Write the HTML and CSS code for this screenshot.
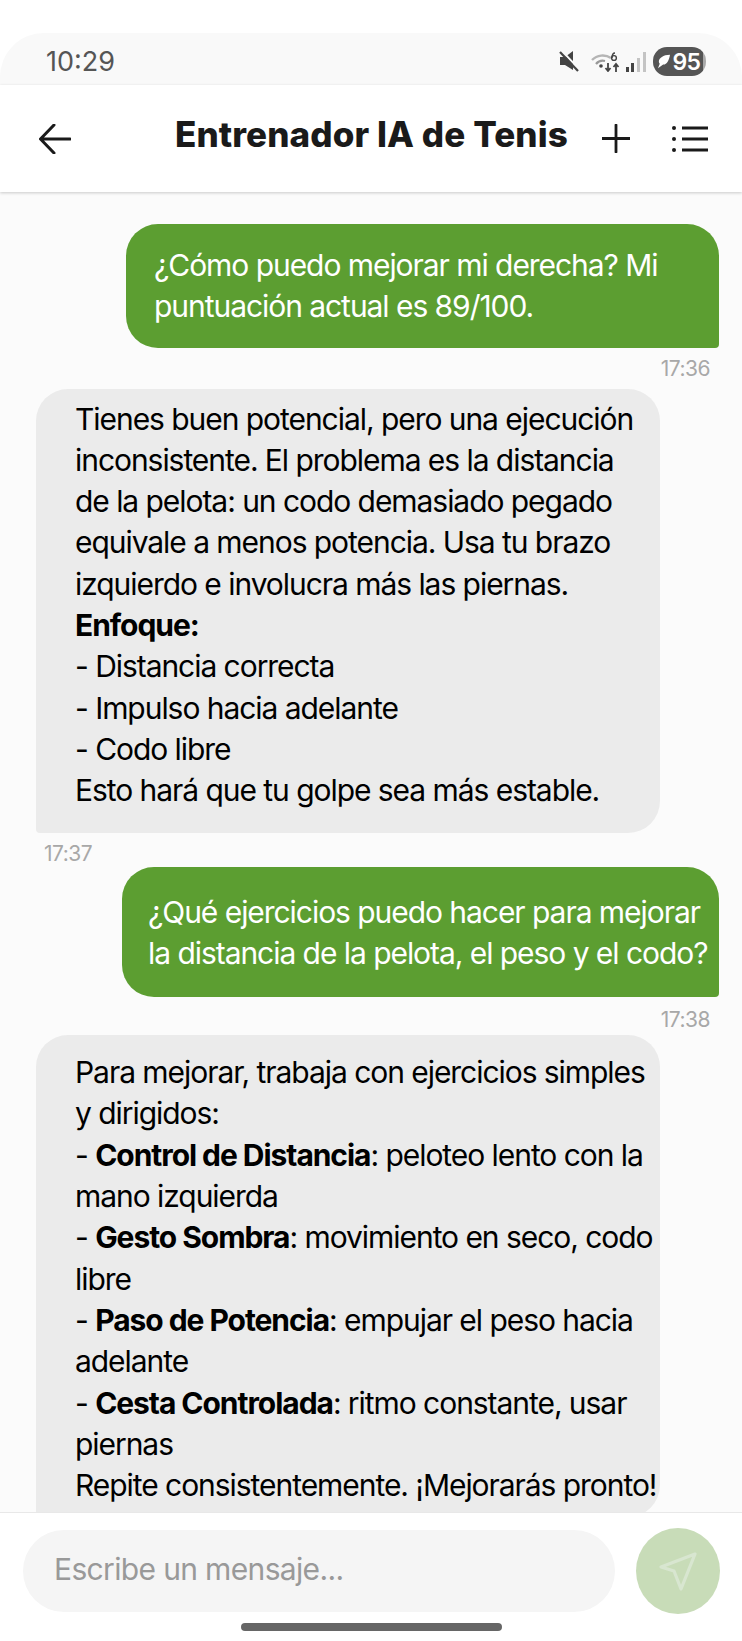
FILE: index.html
```html
<!DOCTYPE html>
<html lang="es">

<head>
    <meta charset="UTF-8">
    <meta name="viewport" content="width=device-width, initial-scale=1.0">
    <title>Entrenador IA de Tenis</title>
    <link rel="stylesheet" href="styles.css">
</head>

<body>
    <div class="phone">
        <!-- Status bar -->
        <div class="status-bar">
            <span class="clock">10:29</span>
            <div class="status-icons">
                <svg class="ic-mute" viewBox="0 0 20 21">
                    <path d="M1 6h5l8-6v19l-8-5H1z" fill="#444" />
                    <path d="M3 0l18 19" stroke="#fafafa" stroke-width="2" fill="none" />
                    <path d="M1 1l18 19" stroke="#444" stroke-width="2.200" fill="none" />
                </svg>
                <svg class="ic-wifi" viewBox="0 0 30 20">
                    <path d="M1 8a15 15 0 0 1 19-2" stroke="#b5b5b5" stroke-width="2.4" fill="none" />
                    <path d="M5 12a9 9 0 0 1 9-3" stroke="#999" stroke-width="2.2" fill="none" />
                    <circle cx="10" cy="14" r="1.8" fill="#444" />
                    <path d="M17 11v8M14.5 16l2.5 3 2.5-3" stroke="#444" stroke-width="1.8" fill="none" />
                    <path d="M25 20v-7M22.5 15l2.5-3 2.5 3" stroke="#444" stroke-width="1.8" fill="none" />
                    <circle cx="23" cy="6" r="2.4" stroke="#444" stroke-width="1.4" fill="none" />
                    <path d="M21 6c0-3 1-5 3-5" stroke="#444" stroke-width="1.4" fill="none" />
                </svg>
                <svg class="ic-signal" viewBox="0 0 20 20">
                    <rect x="0" y="15" width="3" height="5" fill="#444" />
                    <rect x="5" y="11" width="3" height="9" fill="#444" />
                    <rect x="11" y="6" width="3" height="14" fill="#c4c4c4" />
                    <rect x="17" y="0" width="3" height="20" fill="#c4c4c4" />
                </svg>
                <div class="battery">
                    <svg class="ic-bolt" viewBox="0 0 14 16">
                        <path d="M14 0C6 0 1 4 1 8c0 1 .5 2 1 2.500L0 16l6-4.500c4 .5 7-5 8-11.500z" fill="#fff" />
                    </svg>
                    <span>95</span>
                </div>
            </div>
        </div>

        <!-- App bar -->
        <header class="app-bar">
            <svg class="ic-back" viewBox="0 0 32 30">
                <path d="M31 15H2M15 1L1.500 15 15 29" stroke="#1a1a1a" stroke-width="3" fill="none" stroke-linecap="round" stroke-linejoin="round" />
            </svg>
            <h1 class="title">Entrenador IA de Tenis</h1>
            <svg class="ic-plus" viewBox="0 0 28 29">
                <path d="M14 1v27M0 14.500h28" stroke="#1a1a1a" stroke-width="2.800" fill="none" stroke-linecap="round" />
            </svg>
            <svg class="ic-list" viewBox="0 0 36 26">
                <circle cx="2" cy="2" r="2" fill="#1a1a1a" />
                <circle cx="2" cy="13" r="2" fill="#1a1a1a" />
                <circle cx="2" cy="24" r="2" fill="#1a1a1a" />
                <path d="M10 2h26M10 13h26M10 24h26" stroke="#1a1a1a" stroke-width="2.800" fill="none" />
            </svg>
        </header>

        <!-- Messages -->
        <main class="chat">
            <div class="bubble user first">
                ¿Cómo puedo mejorar mi derecha? Mi<br>
                puntuación actual es 89/100.
            </div>
            <div class="time right">17:36</div>

            <div class="bubble bot">
                Tienes buen potencial, pero una ejecución<br>
                inconsistente. El problema es la distancia<br>
                de la pelota: un codo demasiado pegado<br>
                equivale a menos potencia. Usa tu brazo<br>
                izquierdo e involucra más las piernas.<br>
                <b>Enfoque:</b><br>
                - Distancia correcta<br>
                - Impulso hacia adelante<br>
                - Codo libre<br>
                Esto hará que tu golpe sea más estable.
            </div>
            <div class="time left">17:37</div>

            <div class="bubble user second">
                ¿Qué ejercicios puedo hacer para mejorar<br>
                la distancia de la pelota, el peso y el codo?
            </div>
            <div class="time right low">17:38</div>

            <div class="bubble bot last">
                Para mejorar, trabaja con ejercicios simples<br>
                y dirigidos:<br>
                - <b>Control de Distancia</b>: peloteo lento con la<br>
                mano izquierda<br>
                - <b>Gesto Sombra</b>: movimiento en seco, codo<br>
                libre<br>
                - <b>Paso de Potencia</b>: empujar el peso hacia<br>
                adelante<br>
                - <b>Cesta Controlada</b>: ritmo constante, usar<br>
                piernas<br>
                Repite consistentemente. ¡Mejorarás pronto!
            </div>
        </main>

        <!-- Input -->
        <footer class="input-bar">
            <div class="input-row">
                <div class="input">Escribe un mensaje...</div>
                <div class="send">
                    <svg viewBox="0 0 38 39">
                        <path d="M36 2L2 15l13 4 7 18z" stroke="#d8e6d0" stroke-width="3.200" fill="none" stroke-linejoin="round" />
                    </svg>
                </div>
            </div>
            <div class="home-bar"></div>
        </footer>
    </div>
</body>

</html>
```

FILE: styles.css
```css
/* General styles */
* {
    box-sizing: border-box;
}

body {
    margin: 0;
    background: #fff;
    font-family: Inter, "Noto Sans", sans-serif;
}

.phone {
    width: 742px;
    height: 1641px;
    padding-top: 33px;
    display: flex;
    flex-direction: column;
    overflow: hidden;
}

/* Status bar */
.status-bar {
    height: 52px;
    flex: none;
    padding: 5px 36px 0 46px;
    background: #f9f9f9;
    border-radius: 44px 44px 0 0;
    display: flex;
    align-items: center;
    justify-content: space-between;
}

.clock {
    font-size: 27px;
    color: #555;
}

.status-icons {
    display: flex;
    align-items: center;
}

.ic-mute {
    width: 20px;
    height: 21px;
    margin-right: 12px;
}

.ic-wifi {
    width: 30px;
    height: 20px;
    margin-right: 5px;
}

.ic-signal {
    width: 20px;
    height: 20px;
    margin-right: 7px;
}

.battery {
    width: 53px;
    height: 29px;
    background: linear-gradient(to right, #555 94%, #aaa 94%);
    border-radius: 14px;
    color: #fff;
    font-size: 23px;
    font-weight: 600;
    letter-spacing: -0.5px;
    display: flex;
    align-items: center;
    justify-content: center;
    gap: 2px;
}

.ic-bolt {
    width: 12px;
    height: 15px;
}

/* App bar */
.app-bar {
    height: 107px;
    flex: none;
    background: #fff;
    box-shadow: 0 1px 3px rgba(0, 0, 0, 0.2);
    padding: 0 34px 0 39px;
    display: flex;
    align-items: center;
    position: relative;
}

.ic-back {
    width: 32px;
    height: 30px;
}

.title {
    margin: 0 0 10px 104px;
    width: 392px;
    font-size: 35px;
    font-weight: 800;
    color: #1a1a1a;
    letter-spacing: 0.1px;
    white-space: nowrap;
}

.ic-plus {
    width: 28px;
    height: 29px;
    margin-left: 35px;
}

.ic-list {
    width: 36px;
    height: 26px;
    margin-left: 42px;
}

/* Chat */
.chat {
    flex: 1;
    min-height: 0;
    overflow: hidden;
    background: #fbfbfb;
    padding: 32px 23px 0 36px;
    display: flex;
    flex-direction: column;
}

.bubble {
    flex: none;
    font-size: 30px;
    line-height: 41.3px;
    letter-spacing: -1.05px;
    white-space: nowrap;
}

.bubble b {
    font-weight: 700;
}

.user {
    align-self: flex-end;
    background: #5c9e31;
    color: #fff;
    border-radius: 32px 32px 4px 32px;
}

.user.first {
    width: 593px;
    padding: 21px 10px 20px 28px;
}

.user.second {
    width: 597px;
    padding: 25px 4px 23px 26px;
}

.bot {
    width: 624px;
    background: #ebebeb;
    color: #000;
    border-radius: 32px 32px 32px 4px;
    padding: 10px 10px 21px 39px;
}

.bot.last {
    padding: 17px 10px 11px 39px;
}

.time {
    flex: none;
    height: 41px;
    padding-top: 8px;
    font-size: 21px;
    color: #a8a8a8;
    letter-spacing: -0.5px;
}

.time.right {
    text-align: right;
    padding-right: 9px;
}

.time.left {
    padding-left: 8px;
    height: 34px;
}

.time.low {
    height: 38px;
    padding-top: 10px;
}

/* Input */
.input-bar {
    height: 129px;
    flex: none;
    background: #fff;
    border-top: 1px solid #e8e8e8;
    margin-top: -129px;
    position: relative;
    padding: 15px 22px 0 23px;
}

.input-row {
    display: flex;
    align-items: center;
    justify-content: space-between;
}

.input {
    width: 592px;
    height: 82px;
    background: #f5f5f5;
    border-radius: 41px;
    padding: 0 0 4px 31px;
    display: flex;
    align-items: center;
    font-size: 30px;
    letter-spacing: -0.65px;
    color: #999;
}

.send {
    width: 84px;
    height: 86px;
    border-radius: 50%;
    background: #c8dcb8;
    display: flex;
    align-items: center;
    justify-content: center;
}

.send svg {
    width: 38px;
    height: 39px;
}

.home-bar {
    width: 261px;
    height: 8px;
    margin: 9px auto 0;
    background: #666;
    border-radius: 4px;
}
```
